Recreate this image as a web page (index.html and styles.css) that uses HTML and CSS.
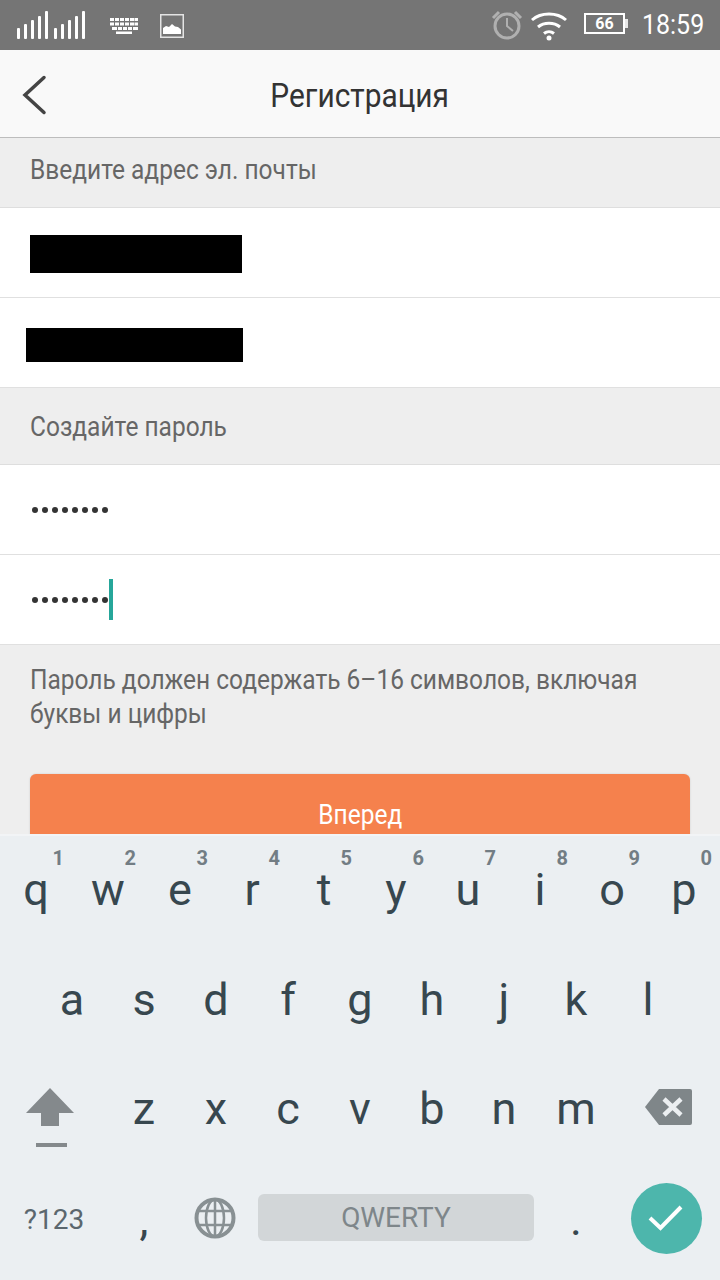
FILE: index.html
```html
<!DOCTYPE html>
<html lang="ru">
<head>
  <meta charset="UTF-8" />
  <meta name="viewport" content="width=device-width, initial-scale=1" />
  <title>Регистрация</title>
  <link rel="stylesheet" href="styles.css">
</head>
<body>
  <div class="screen">
    <div class="status-bar">
      <div class="status-left">
        <svg class="ic-signal" width="80" height="30" viewBox="0 0 80 30" fill="#fff">
          <rect x="1" y="17" width="3" height="11" rx="1"/><rect x="8" y="13" width="3" height="15" rx="1"/><rect x="15" y="9" width="3" height="19" rx="1"/><rect x="22" y="5" width="3" height="23" rx="1"/><rect x="29" y="0" width="3" height="28" rx="1"/>
          <rect x="38" y="17" width="3" height="11" rx="1"/><rect x="45" y="13" width="3" height="15" rx="1"/><rect x="52" y="9" width="3" height="19" rx="1"/><rect x="59" y="5" width="3" height="23" rx="1"/><rect x="66" y="0" width="3" height="28" rx="1"/>
        </svg>
        <svg class="ic-kbd" width="28" height="16" viewBox="0 0 28 16" fill="#fff">
          <path d="M0 0h4v3H0zM5 0h4v3H5zM10 0h4v3h-4zM15 0h4v3h-4zM20 0h4v3h-4zM24.500 0H28v3h-3.500zM0 4.500h4v3H0zM5 4.500h4v3H5zM10 4.500h4v3h-4zM15 4.500h4v3h-4zM20 4.500h4v3h-4zM24.500 4.500H28v3h-3.500zM2 9h5v3H2zM8 9h4v3H8zM13 9h4v3h-4zM18 9h4v3h-4zM23 9h5v3h-5zM6 13.500h16V16H6z"/>
        </svg>
        <svg class="ic-pic" width="24" height="24" viewBox="0 0 24 24">
          <rect x="0.750" y="0.750" width="22.500" height="22.500" fill="none" stroke="#e4e4e4" stroke-width="1.500"/>
          <path d="M3 20v-6l3-2 3 1 3-3 3 2.500 3 .5 3 2.500V20z" fill="#fff"/>
        </svg>
      </div>
      <div class="status-right">
        <svg class="ic-alarm" width="32" height="30" viewBox="0 0 32 30" fill="none" stroke="#b0b0b0">
          <circle cx="16" cy="16" r="12" stroke-width="3"/>
          <path d="M16 8v8l6 5" stroke-width="2"/>
          <path d="M2 8l6-6M30 8l-6-6" stroke-width="3"/>
        </svg>
        <svg class="ic-wifi" width="38" height="32" viewBox="0 0 38 32" fill="none" stroke="#fff" stroke-width="3">
          <path d="M2 11C11 3 27 3 36 11M8 18c6-5 16-5 22 0M14 24.500c3-2.500 7-2.500 10 0"/>
          <circle cx="19" cy="29" r="2.500" fill="#fff" stroke="none"/>
        </svg>
        <div class="battery"><span class="battery-num">66</span></div>
        <div class="clock"><span class="clock-text">18:59</span></div>
      </div>
    </div>

    <div class="nav-bar">
      <svg class="back" width="26" height="40" viewBox="0 0 26 40" fill="none" stroke="#444" stroke-width="3.500" stroke-linecap="round">
        <path d="M23 2.500 L4 20 L23 37.500"/>
      </svg>
      <div class="nav-title">Регистрация</div>
    </div>

    <div class="section-head section-first"><span class="narrow">Введите адрес эл. почты</span></div>
    <div class="field"><div class="redact redact-a"></div></div>
    <div class="field"><div class="redact redact-b"></div></div>
    <div class="section-head section-second"><span class="narrow">Создайте пароль</span></div>
    <div class="field"><div class="dots"><i></i><i></i><i></i><i></i><i></i><i></i><i></i><i></i></div></div>
    <div class="field"><div class="dots"><i></i><i></i><i></i><i></i><i></i><i></i><i></i><i></i><span class="caret"></span></div></div>

    <div class="lower">
      <p class="hint"><span class="narrow">Пароль должен содержать 6–16 символов, включая</span><br><span class="narrow">буквы и цифры</span></p>
      <div class="next-btn"><span class="narrow">Вперед</span></div>
    </div>

    <div class="keyboard">
      <div class="kb-row">
        <div class="key">q<sup>1</sup></div><div class="key">w<sup>2</sup></div><div class="key">e<sup>3</sup></div><div class="key">r<sup>4</sup></div><div class="key">t<sup>5</sup></div><div class="key">y<sup>6</sup></div><div class="key">u<sup>7</sup></div><div class="key">i<sup>8</sup></div><div class="key">o<sup>9</sup></div><div class="key">p<sup>0</sup></div>
      </div>
      <div class="kb-row">
        <div class="key">a</div><div class="key">s</div><div class="key">d</div><div class="key">f</div><div class="key">g</div><div class="key">h</div><div class="key">j</div><div class="key">k</div><div class="key">l</div>
      </div>
      <div class="kb-row kb-row3">
        <div class="key key-wide">
          <svg class="ic-shift" width="50" height="60" viewBox="0 0 50 60" fill="#84898c">
            <path d="M25 0 L49 25 H34 V38 H16 V25 H1 Z"/>
            <rect x="11" y="55" width="31" height="4"/>
          </svg>
        </div>
        <div class="key">z</div><div class="key">x</div><div class="key">c</div><div class="key">v</div><div class="key">b</div><div class="key">n</div><div class="key">m</div>
        <div class="key key-wide">
          <svg class="ic-back" width="50" height="36" viewBox="0 0 50 36">
            <path d="M15 0 H46 Q48 0 48 2 V34 Q48 36 46 36 H15 L1 18 Z" fill="#7f8689"/>
            <path d="M20 10 L37 26 M37 10 L20 26" stroke="#eceff1" stroke-width="4.500"/>
          </svg>
        </div>
      </div>
      <div class="kb-row">
        <div class="key key-sym">?123</div>
        <div class="key">,</div>
        <div class="key key-globe">
          <svg width="42" height="42" viewBox="0 0 42 42" fill="none" stroke="#889093" stroke-width="2.500">
            <circle cx="21" cy="21" r="18.500" stroke-width="4"/>
            <ellipse cx="21" cy="21" rx="9" ry="18.500"/>
            <path d="M21 2v38M3 14h36M3 28h36"/>
          </svg>
        </div>
        <div class="space-bar">QWERTY</div>
        <div class="key key-dot">.</div>
        <div class="key key-enter">
          <div class="enter-btn">
            <svg width="36" height="28" viewBox="0 0 36 28" fill="none" stroke="#fff" stroke-width="4">
              <path d="M2 14 L12.500 24 L33 3"/>
            </svg>
          </div>
        </div>
      </div>
    </div>
  </div>
</body>
</html>
```

FILE: styles.css
```css
* {
  box-sizing: border-box;
}

html, body {
  margin: 0;
  padding: 0;
}

body {
  font-family: Roboto, "Noto Sans", sans-serif;
  background-color: #eeeeee;
}

.screen {
  position: relative;
  width: 720px;
  height: 1280px;
  overflow: hidden;
}

.narrow {
  display: inline-block;
  transform: scaleX(0.907);
  transform-origin: left center;
  white-space: nowrap;
}

/* status bar */
.status-bar {
  height: 50px;
  background-color: #757575;
  display: flex;
  justify-content: space-between;
  align-items: center;
  color: white;
}

.status-left {
  display: flex;
  align-items: center;
  padding-left: 16px;
}

.ic-signal {
  margin-top: 2px;
}

.ic-kbd {
  margin-left: 14px;
  margin-top: 1px;
}

.ic-pic {
  margin-left: 22px;
  margin-top: 1px;
}

.status-right {
  display: flex;
  align-items: center;
  padding-right: 16px;
}

.ic-wifi {
  margin-left: 7px;
}

.battery {
  position: relative;
  width: 41px;
  height: 21px;
  margin-left: 16px;
  margin-top: -3px;
  border: 2px solid white;
  text-align: center;
}

.battery::after {
  content: "";
  position: absolute;
  right: -5px;
  top: 4px;
  width: 3px;
  height: 9px;
  background-color: #e8e8e8;
}

.battery-num {
  display: block;
  font-size: 16px;
  font-weight: bold;
  line-height: 17px;
}

.clock {
  width: 62px;
  margin-left: 17px;
  font-size: 27px;
}

.clock-text {
  display: inline-block;
  transform: scaleX(0.925);
  transform-origin: left center;
}

/* nav */
.nav-bar {
  position: relative;
  height: 88px;
  padding-top: 3px;
  background-color: #f9f9f9;
  border-bottom: 1px solid #bdbdbd;
  display: flex;
  align-items: center;
  justify-content: center;
}

.back {
  position: absolute;
  left: 21px;
  top: 25px;
}

.nav-title {
  font-size: 33px;
  color: #333333;
  transform: scaleX(0.905);
  margin-left: -1px;
}

.section-head {
  padding-left: 30px;
  display: flex;
  align-items: center;
  font-size: 27px;
  color: #666666;
  background-color: #eeeeee;
  border-bottom: 1px solid #dedede;
}

.section-first {
  height: 70px;
  padding-bottom: 6px;
}

.section-second {
  height: 77px;
  padding-top: 2px;
}

.field {
  position: relative;
  height: 90px;
  background-color: white;
  border-bottom: 1px solid #e0e0e0;
  display: flex;
  align-items: center;
  padding-left: 30px;
}

.redact {
  background-color: black;
}

.redact-a {
  width: 212px;
  height: 38px;
  margin-top: 3px;
}

.redact-b {
  width: 217px;
  height: 34px;
  margin-left: -4px;
  margin-top: 5px;
}

.dots {
  display: flex;
  align-items: center;
  gap: 4px;
  padding-left: 2px;
  position: relative;
}

.dots i {
  display: block;
  width: 6px;
  height: 6px;
  border-radius: 50%;
  background-color: #333333;
}

.caret {
  position: absolute;
  left: 79px;
  top: -18px;
  width: 4px;
  height: 41px;
  background-color: #26a69a;
}

.lower {
  padding: 18px 30px 0;
}

.hint {
  margin: 0;
  font-size: 27px;
  line-height: 34px;
  color: #666666;
}

.next-btn {
  margin-top: 43px;
  height: 90px;
  padding-top: 25px;
  background-color: #f5814d;
  border-radius: 6px 6px 0 0;
  box-shadow: 0 0 2px rgba(0,0,0,0.15);
  color: white;
  font-size: 27px;
  text-align: center;
}

.next-btn .narrow {
  transform-origin: center center;
}

/* keyboard lies over the page */
.keyboard {
  position: absolute;
  left: 0;
  right: 0;
  top: 834px;
  bottom: 0;
  background-color: #ebeff2;
  box-shadow: inset 0 2px 0 #f2f4f6;
  color: #37474f;
}

.kb-row {
  display: flex;
  justify-content: center;
  height: 110px;
}

.kb-row3 .key {
  padding-bottom: 2px;
}

.key {
  position: relative;
  width: 72px;
  display: flex;
  align-items: center;
  justify-content: center;
  font-size: 45px;
}

.key sup {
  position: absolute;
  top: 12px;
  right: 8px;
  font-size: 20px;
  font-weight: 700;
  line-height: 24px;
  color: #727d84;
}

.key-wide {
  width: 108px;
}

.ic-shift {
  margin-right: 8px;
  margin-top: 19px;
}

.ic-back {
  margin-left: 6px;
  margin-top: -2px;
}

.key-sym {
  width: 108px;
  font-size: 28px;
  color: #5b676e;
}

.key-globe {
  width: 70px;
}

.key-globe svg {
  margin-top: -3px;
}

.space-bar {
  width: 276px;
  height: 47px;
  margin-top: 30px;
  margin-left: 8px;
  background-color: #d2d6d8;
  border-radius: 6px;
  display: flex;
  align-items: center;
  justify-content: center;
  font-size: 28px;
  color: #7e868a;
}

.key-dot {
  width: 84px;
}

.key-enter {
  width: 102px;
  padding-right: 6px;
  padding-bottom: 2px;
}

.enter-btn {
  width: 71px;
  height: 71px;
  border-radius: 50%;
  background-color: #4db6ac;
  display: flex;
  align-items: center;
  justify-content: center;
}
```
